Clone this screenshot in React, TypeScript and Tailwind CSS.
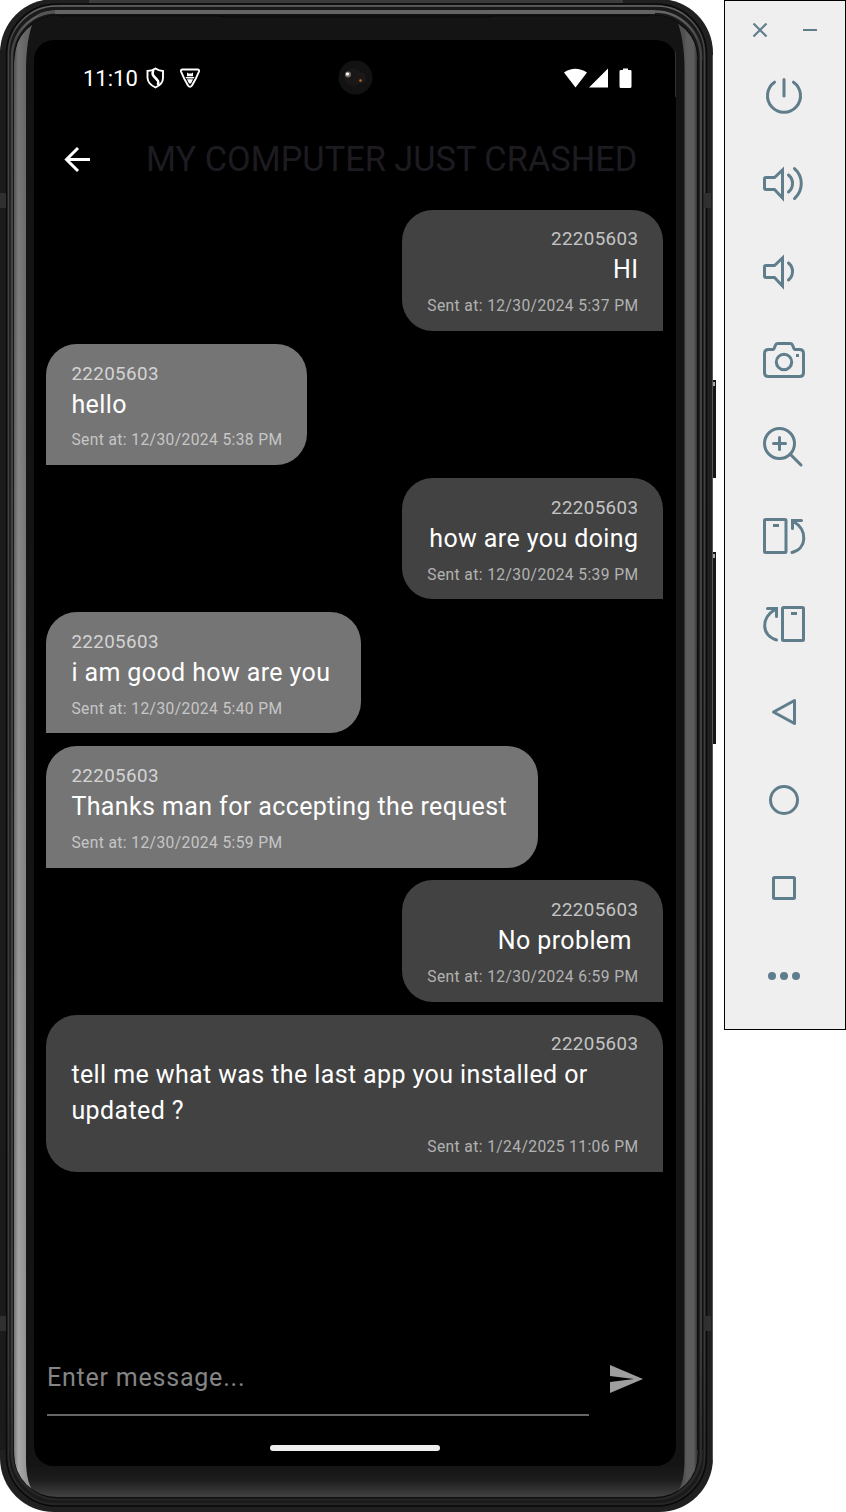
import React from "react";

type Message = { text: string; sent: string; mine: boolean; shape: string };

const messages: Message[] = [
  { text: "HI", sent: "12/30/2024 5:37 PM", mine: true, shape: "w-[261px]" },
  { text: "hello", sent: "12/30/2024 5:38 PM", mine: false, shape: "w-[261px]" },
  { text: "how are you doing", sent: "12/30/2024 5:39 PM", mine: true, shape: "w-[261px]" },
  { text: "i am good how are you", sent: "12/30/2024 5:40 PM", mine: false, shape: "w-[315px]" },
  { text: "Thanks man for accepting the request", sent: "12/30/2024 5:59 PM", mine: false, shape: "w-[491.5px]" },
  { text: "No problem ", sent: "12/30/2024 6:59 PM", mine: true, shape: "w-[261px]" },
  { text: "tell me what was the last app you installed or updated ?", sent: "1/24/2025 11:06 PM", mine: true, shape: "w-[617px]" },
];

function Bubble({ m, wide }: { m: Message; wide: boolean }) {
  return (
    <div
      className={`flex flex-col rounded-t-[31px] px-[25px] pt-[16.9px] pb-[13.3px] ${m.shape} ${
        m.mine ? "items-end self-end rounded-bl-[31px] bg-[#424242]" : "items-start self-start rounded-br-[31px] bg-[#757575]"
      }`}
    >
      <div className="text-[18.75px] leading-[26px] tracking-[0.39px] text-white/70">22205603</div>
      <div className={`text-[25px] leading-[35.7px] tracking-[0.39px] whitespace-pre text-white ${wide ? "w-full whitespace-pre-wrap" : ""}`}>
        {m.text}
      </div>
      <div className="mt-[7.2px] text-[15.6px] leading-[22.3px] tracking-[0.39px] whitespace-nowrap text-white/60">Sent at: {m.sent}</div>
    </div>
  );
}

function PhoneBody() {
  return (
    <svg className="absolute inset-0" width="724" height="1512" viewBox="0 0 724 1512" fill="none" aria-hidden="true">
      <defs>
        <linearGradient id="left" x1="0" y1="0" x2="0" y2="1">
          <stop offset="0" stopColor="#707070" />
          <stop offset=".3" stopColor="#848484" />
          <stop offset="1" stopColor="#ababab" />
        </linearGradient>
        <linearGradient id="leftShade" gradientUnits="userSpaceOnUse" x1="14" y1="0" x2="26" y2="0">
          <stop offset="0" stopColor="#000" stopOpacity=".3" />
          <stop offset=".35" stopColor="#000" stopOpacity="0" />
          <stop offset="1" stopColor="#000" stopOpacity=".12" />
        </linearGradient>
        <linearGradient id="right" gradientUnits="userSpaceOnUse" x1="684" y1="0" x2="698" y2="0">
          <stop offset="0" stopColor="#505050" />
          <stop offset=".2" stopColor="#5c5c5c" />
          <stop offset=".7" stopColor="#5c5c5c" />
          <stop offset=".85" stopColor="#424242" />
          <stop offset="1" stopColor="#292929" />
        </linearGradient>
        <linearGradient id="chin" x1="0" y1="0" x2="0" y2="1">
          <stop offset="0" stopColor="#151515" />
          <stop offset=".45" stopColor="#1d1d1d" />
          <stop offset="1" stopColor="#424242" />
        </linearGradient>
        <linearGradient id="rim" x1="0" y1="0" x2="0" y2="1">
          <stop offset="0" stopColor="#666" />
          <stop offset=".02" stopColor="#444" />
          <stop offset=".9" stopColor="#3a3a3a" />
          <stop offset="1" stopColor="#262626" />
        </linearGradient>
        <clipPath id="face">
          <rect x="14" y="17" width="684" height="1480" rx="43" />
        </clipPath>
      </defs>
      <path d="M711 380h5v98h-5zM711 552h5v192h-5z" fill="#161616" />
      <path d="M712 382h3v4h-3zM712 554h3v4h-3z" fill="#aaa" />
      <rect x="0" y="-1" width="713" height="1513" rx="54" fill="#202020" />
      <path d="M0 50V1450H7V50Z" fill="#1b1b1b" />
      <path d="M712.500 55V1460" stroke="#555" />
      <path d="M89 1H623" stroke="#3c3c3c" strokeWidth="4" />
      <rect x="6.500" y="4" width="700" height="1502" rx="50" stroke="#0a0a0a" strokeWidth="1.500" />
      <rect x="8.500" y="6" width="696" height="1498" rx="48" fill="#1a1a1a" stroke="url(#rim)" strokeWidth="1.500" />
      <rect x="12" y="11.500" width="689" height="1487.500" rx="46" stroke="url(#rim)" strokeWidth="2.500" />
      <rect x="14" y="15" width="684" height="1483" rx="44" fill="#141414" stroke="#0c0c0c" />
      <g clipPath="url(#face)">
        <rect x="14" y="1466" width="684" height="31" fill="url(#chin)" />
        <path d="M14 64Q16 30 34 20Q26 38 26 70V1460Q26 1484 35 1494Q14 1484 14 1450Z" fill="url(#left)" />
        <path d="M14 64Q16 30 34 20Q26 38 26 70V1460Q26 1484 35 1494Q14 1484 14 1450Z" fill="url(#leftShade)" />
        <path d="M698 64Q696 28 676 18Q684.500 38 684.500 70V1460Q684.500 1484 676 1494Q698 1484 698 1450Z" fill="url(#right)" />
      </g>
      <path d="M55 12Q45 12 38 16" stroke="#555" strokeWidth="3" />
      <path d="M55 12H655" stroke="#646464" strokeWidth="4" />
      <path d="M60 5.500H650" stroke="#5b5b5b" />
      <path d="M60 16H220l5 1H488l5-1H650" stroke="#080808" />
      <path d="M702.500 60V1450M697.500 60V1450" stroke="#101010" />
      <path d="M0 193h6v15H0zM704 193h7v15h-7zM0 1316h6v15H0zM704 1316h7v15h-7z" fill="#303030" />
    </svg>
  );
}

function EmuIcon({ children }: { children: React.ReactNode }) {
  return (
    <svg
      className="h-[48px] w-[48px]"
      viewBox="0 0 48 48"
      fill="none"
      stroke="#607d8b"
      strokeWidth="3"
      strokeLinejoin="round"
      strokeLinecap="round"
    >
      {children}
    </svg>
  );
}

function Toolbar() {
  return (
    <aside className="flex h-[1030px] w-[122px] flex-col border border-black bg-[#efefef]">
      <div className="mt-[19px] flex h-[20px] w-full pl-[25px]">
        <svg width="80" height="20" viewBox="0 0 80 20" fill="none" stroke="#607d8b" strokeWidth="2.200">
          <path d="M3.500 3.500l13 13M16.500 3.500l-13 13M53 10h14" />
        </svg>
      </div>
      <div className="mt-[32px] ml-[35px] flex flex-col gap-[40px]">
        <EmuIcon>
          <path d="M24 7.500v16.500M14.500 10.200a16.500 16.500 0 1 0 19 0" />
        </EmuIcon>
        <EmuIcon>
          <path strokeLinejoin="miter" d="M6 17.500h8.500L22.500 10v28l-8-8.500H6q-1.500 0-1.500-1.500V19q0-1.500 1.500-1.500Z" />
          <path d="M28.500 15a11 11 0 0 1 0 17M34.500 8.500a20 20 0 0 1 0 30" />
        </EmuIcon>
        <EmuIcon>
          <path strokeLinejoin="miter" d="M6 17.500h8.500L22.500 10v28l-8-8.500H6q-1.500 0-1.500-1.500V19q0-1.500 1.500-1.500Z" />
          <path d="M28.500 15a11 11 0 0 1 0 17" />
        </EmuIcon>
        <EmuIcon>
          <path d="M8.500 13.500h4.500q1 0 1.500-2l1-2.500q.500-1.500 2-1.500h13q1.500 0 2 1.500l1 2.500q.500 2 1.500 2h4.500q4 0 4 4v19q0 4-4 4h-31q-4 0-4-4v-19q0-4 4-4Z" />
          <circle cx="24" cy="26" r="7.700" />
          <path d="M36 18h3v3h-3z" fill="#607d8b" stroke="none" />
        </EmuIcon>
        <EmuIcon>
          <circle cx="19.500" cy="19.500" r="15" />
          <path d="M30.500 30.500l10.500 10.500M19.500 13.500v12M13.500 19.500h12" />
        </EmuIcon>
        <EmuIcon>
          <rect x="4.500" y="7.500" width="21.500" height="33" rx="1" />
          <path strokeLinecap="butt" d="M13 13.500h6" />
          <path strokeLinejoin="miter" d="M32.500 16.500v-8h9M33.500 9.500C48 18 47 37 32 40.500" />
        </EmuIcon>
        <EmuIcon>
          <rect x="22.500" y="7.500" width="21" height="33" rx="1" />
          <path strokeLinecap="butt" d="M31 13.500h6" />
          <path strokeLinejoin="miter" d="M16.500 16.500v-8H7.500M15 9.500C1 18 1 35 16.500 40" />
        </EmuIcon>
        <EmuIcon>
          <path d="M34.500 12.500v23L13.500 24Z" />
        </EmuIcon>
        <EmuIcon>
          <circle cx="24" cy="24" r="13.500" />
        </EmuIcon>
        <EmuIcon>
          <rect x="13.500" y="13.500" width="21" height="21" rx="1" />
        </EmuIcon>
        <EmuIcon>
          <path d="M12 24h.01M24 24h.01M36 24h.01" strokeWidth="8" />
        </EmuIcon>
      </div>
    </aside>
  );
}

export default function App() {
  return (
    <div className="flex h-[1512px] w-[846px] items-start overflow-hidden bg-white font-[Roboto,sans-serif]">
      <main className="relative h-[1512px] w-[724px] shrink-0 pt-[40px] pl-[34px]">
        <PhoneBody />
        <section className="relative flex h-[1426px] w-[642px] flex-col rounded-[20px] bg-black text-white">
          <header className="flex h-[76px] items-center justify-between pr-[43px] pl-[49px]">
            <div className="flex items-center">
              <span className="w-[63px] pt-[1px] text-[22px] leading-[26px]">11:10</span>
              <svg width="19" height="22" viewBox="0 0 19 22" fill="none" stroke="white" strokeWidth="1.900">
                <path d="M1.500 4Q6 4 9.500 1.500Q13 4 17 4V11Q17 17 9.500 20.500Q2 17 1.500 11Z" />
                <path d="M7.500 3Q5.500 7 8 9.500T12 14Q13 16 11.500 18" strokeWidth="2.500" />
              </svg>
              <svg className="ml-[14px]" width="22" height="22" viewBox="0 0 22 22" fill="none">
                <path d="M3.500 2.500h15q2 0 1.500 2Q17 12 13 18.500Q11 21 9 18.500Q5 12 2 4.500Q1.500 2.500 3.500 2.500Z" stroke="white" strokeWidth="2" />
                <path d="M8 5.500l1.500 1h3L14 5.500v3.800H8ZM6.500 10h9l-1 1.500h-7ZM8 12.200h6L12 16.500h-2Z" fill="white" />
              </svg>
            </div>
            <svg width="70" height="24" viewBox="0 0 70 24" fill="white">
              <path d="M1 6.500Q12-1 24 6.500L12.500 21.500ZM26 21.500L45 2.500V21.500ZM56.500 5Q56.500 4 58 4h2V2.500h5v1.500h2q1.500 0 1.500 1V20.500q0 1.500-1.500 1.500h-9q-1.500 0-1.500-1.500Z" />
            </svg>
          </header>
          <svg className="absolute top-[20px] left-[304px]" width="35" height="35" viewBox="0 0 35 35">
            <circle cx="17.500" cy="17.500" r="17" fill="#121212" />
            <circle cx="15" cy="17" r="9" fill="#1b1717" />
            <circle cx="22" cy="18" r="6" fill="#1c1818" />
            <circle cx="10" cy="14.500" r="3" fill="#776c69" />
            <circle cx="9.500" cy="14" r="1.600" fill="#fff" />
            <circle cx="22.500" cy="20.500" r="1.300" fill="#b56b30" />
          </svg>
          <nav className="flex h-[86px] items-center pl-[29px]">
            <svg width="28" height="28" viewBox="0 0 28 28" fill="none" stroke="white" strokeWidth="3">
              <path d="M27 14.500H4M15 3L3.500 14.500L15 26" />
            </svg>
            <h1 className="ml-[55px] text-[34.375px] leading-[44px] whitespace-nowrap text-[#1d1b20]">MY COMPUTER JUST CRASHED</h1>
          </nav>
          <div className="mt-[7.500px] flex flex-1 flex-col gap-[12.800px] pr-[12.600px] pl-[12.400px]">
            {messages.map((m, i) => (
              <Bubble key={i} m={m} wide={i === messages.length - 1} />
            ))}
          </div>
          <footer className="flex h-[130px] pl-[12.500px]">
            <div className="flex h-[80px] w-[542px] items-center border-b-2 border-[#666] pt-[6px] pl-[.500px] text-[25px] tracking-[0.780px] text-[#858585]">
              Enter message...
            </div>
            <svg className="mt-[29px] ml-[21.500px]" width="34" height="28" viewBox="0 0 34 28" fill="#9e9e9e">
              <path d="M0 0L33 14L0 28V17L24 14L0 11Z" />
            </svg>
          </footer>
          <div className="absolute bottom-[15px] left-[236px] h-[6px] w-[170px] rounded-full bg-[#eee]" />
          <svg className="absolute top-[12px] right-0" width="1" height="45" viewBox="0 0 1 45">
            <path d="M.5 0v45" stroke="#333" />
          </svg>
        </section>
      </main>
      <Toolbar />
    </div>
  );
}
